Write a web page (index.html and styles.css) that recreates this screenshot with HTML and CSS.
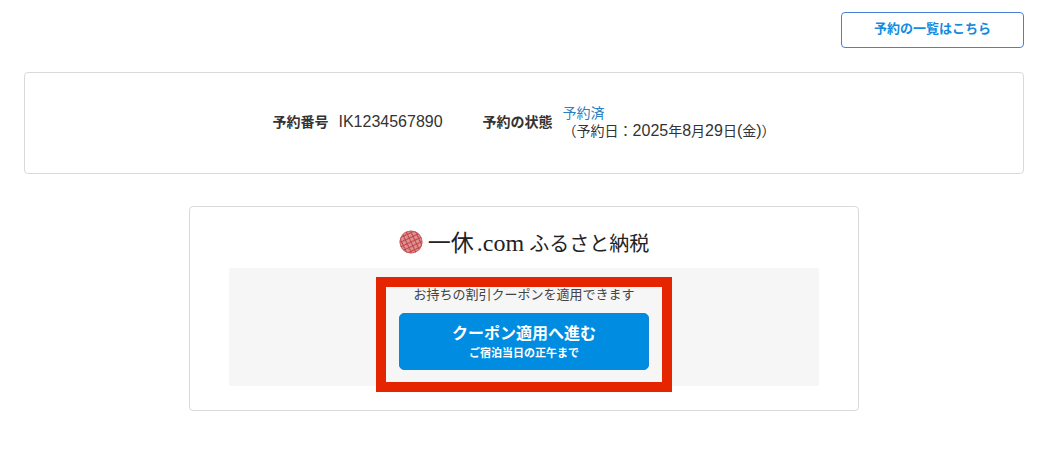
FILE: index.html
```
<!DOCTYPE html>
<html lang="ja">
<head>
<meta charset="utf-8">
<meta name="viewport" content="width=device-width, initial-scale=1">
<title>予約の確認</title>
<link rel="stylesheet" href="styles.css">
</head>
<body>
<main class="page">
  <nav class="toolbar">
    <a class="list-link" href="#">予約の一覧はこちら</a>
  </nav>
  <dl class="card summary">
    <div class="summary-item">
      <dt>予約番号</dt>
      <dd><span class="latin">IK1234567890</span></dd>
    </div>
    <div class="summary-item">
      <dt>予約の状態</dt>
      <dd>
        <span class="status">予約済</span>
        <span class="date">（予約日：<span class="latin">2025</span>年<span class="latin">8</span>月<span class="latin">29</span>日<span class="latin">(</span>金<span class="latin">)</span>）</span>
      </dd>
    </div>
  </dl>
  <section class="card coupon">
    <h1 class="brand">
      <svg class="emblem" viewBox="0 0 24 24" aria-hidden="true">
        <defs>
          <pattern id="shippo" width="6" height="6" patternUnits="userSpaceOnUse" patternTransform="rotate(20 12 12)">
            <g fill="none" stroke="#f0c4bc" stroke-width=".6">
              <circle cx="3" cy="3" r="3"/>
              <circle cx="0" cy="0" r="3"/>
              <circle cx="6" cy="0" r="3"/>
              <circle cx="0" cy="6" r="3"/>
              <circle cx="6" cy="6" r="3"/>
            </g>
          </pattern>
        </defs>
        <circle cx="12" cy="12" r="11.3" fill="#b3262f"/>
        <circle cx="12" cy="12" r="11.3" fill="url(#shippo)"/>
        <circle cx="12" cy="12" r="11" fill="none" stroke="#c4555a" stroke-width=".7"/>
      </svg>
      <span class="brand-name"><span class="brand-kanji">一休</span><span class="brand-latin">.com</span>ふるさと納税</span>
    </h1>
    <div class="panel">
      <div class="highlight">
        <p class="note">お持ちの割引クーポンを適用できます</p>
        <button class="apply" type="button">
          <span class="apply-title">クーポン適用へ進む</span>
          <span class="apply-limit">ご宿泊当日の正午まで</span>
        </button>
      </div>
    </div>
  </section>
</main>
</body>
</html>
```
FILE: styles.css
```
* {
  box-sizing: border-box;
}

body {
  margin: 0;
  background: #fff;
  color: #333;
  font: 14px/18px "Noto Sans CJK JP", sans-serif;
}

.page {
  padding: 12px 24px 40px;
}

.toolbar {
  display: flex;
  justify-content: flex-end;
  margin-bottom: 24px;
}

.list-link {
  padding: 6px 32px 10px;
  border: 1px solid #4a7fd6;
  border-radius: 4px;
  color: #138be0;
  font-size: 13px;
  font-weight: 700;
  text-decoration: none;
}

.card {
  border: 1px solid #d9d9d9;
  border-radius: 4px;
}

.summary {
  display: flex;
  flex-wrap: wrap;
  align-items: center;
  justify-content: center;
  gap: 16px 40px;
  margin: 0 0 32px;
  padding: 30px 24px 34px;
}

.summary-item {
  display: flex;
  align-items: center;
  gap: 10px;
}

.summary dt {
  font-weight: 700;
}

.summary dd {
  margin: 0;
}

.latin {
  font-family: "Liberation Sans", sans-serif;
  font-size: 16px;
  line-height: 12px;
}

.status,
.date {
  display: block;
}

.status {
  color: #2b7fc3;
}

.coupon {
  max-width: 670px;
  margin: 0 auto;
  padding: 18px 39px 24px;
}

.brand {
  display: flex;
  align-items: center;
  justify-content: center;
  gap: 5px;
  margin: 0 0 9px;
  color: #222;
  font-size: 20px;
  font-weight: 400;
  line-height: 32px;
}

.emblem {
  width: 24px;
  height: 24px;
}

.brand-kanji {
  font-size: 23px;
}

.brand-latin {
  padding: 0 5px 0 3px;
  font-family: "Liberation Serif", serif;
  font-size: 24px;
}

.panel {
  display: flex;
  justify-content: center;
  height: 118px;
  padding-top: 9px;
  border-radius: 2px;
  background: #f6f6f6;
}

.highlight {
  height: 115px;
  padding: 0 13px;
  border: 10px solid #e42500;
}

.note {
  margin: 0 0 12px;
  color: #444;
  font-size: 13px;
  line-height: 14px;
  text-align: center;
}

.apply {
  display: flex;
  flex-direction: column;
  align-items: center;
  width: 250px;
  padding: 7px 8px 8px;
  border: 1px solid #1683d8;
  border-radius: 5px;
  background: #008de1;
  color: #fff;
  font-family: inherit;
  font-weight: 700;
  cursor: pointer;
}

.apply-title {
  font-size: 16px;
  line-height: 23px;
}

.apply-limit {
  font-size: 11px;
  line-height: 17px;
}
```
